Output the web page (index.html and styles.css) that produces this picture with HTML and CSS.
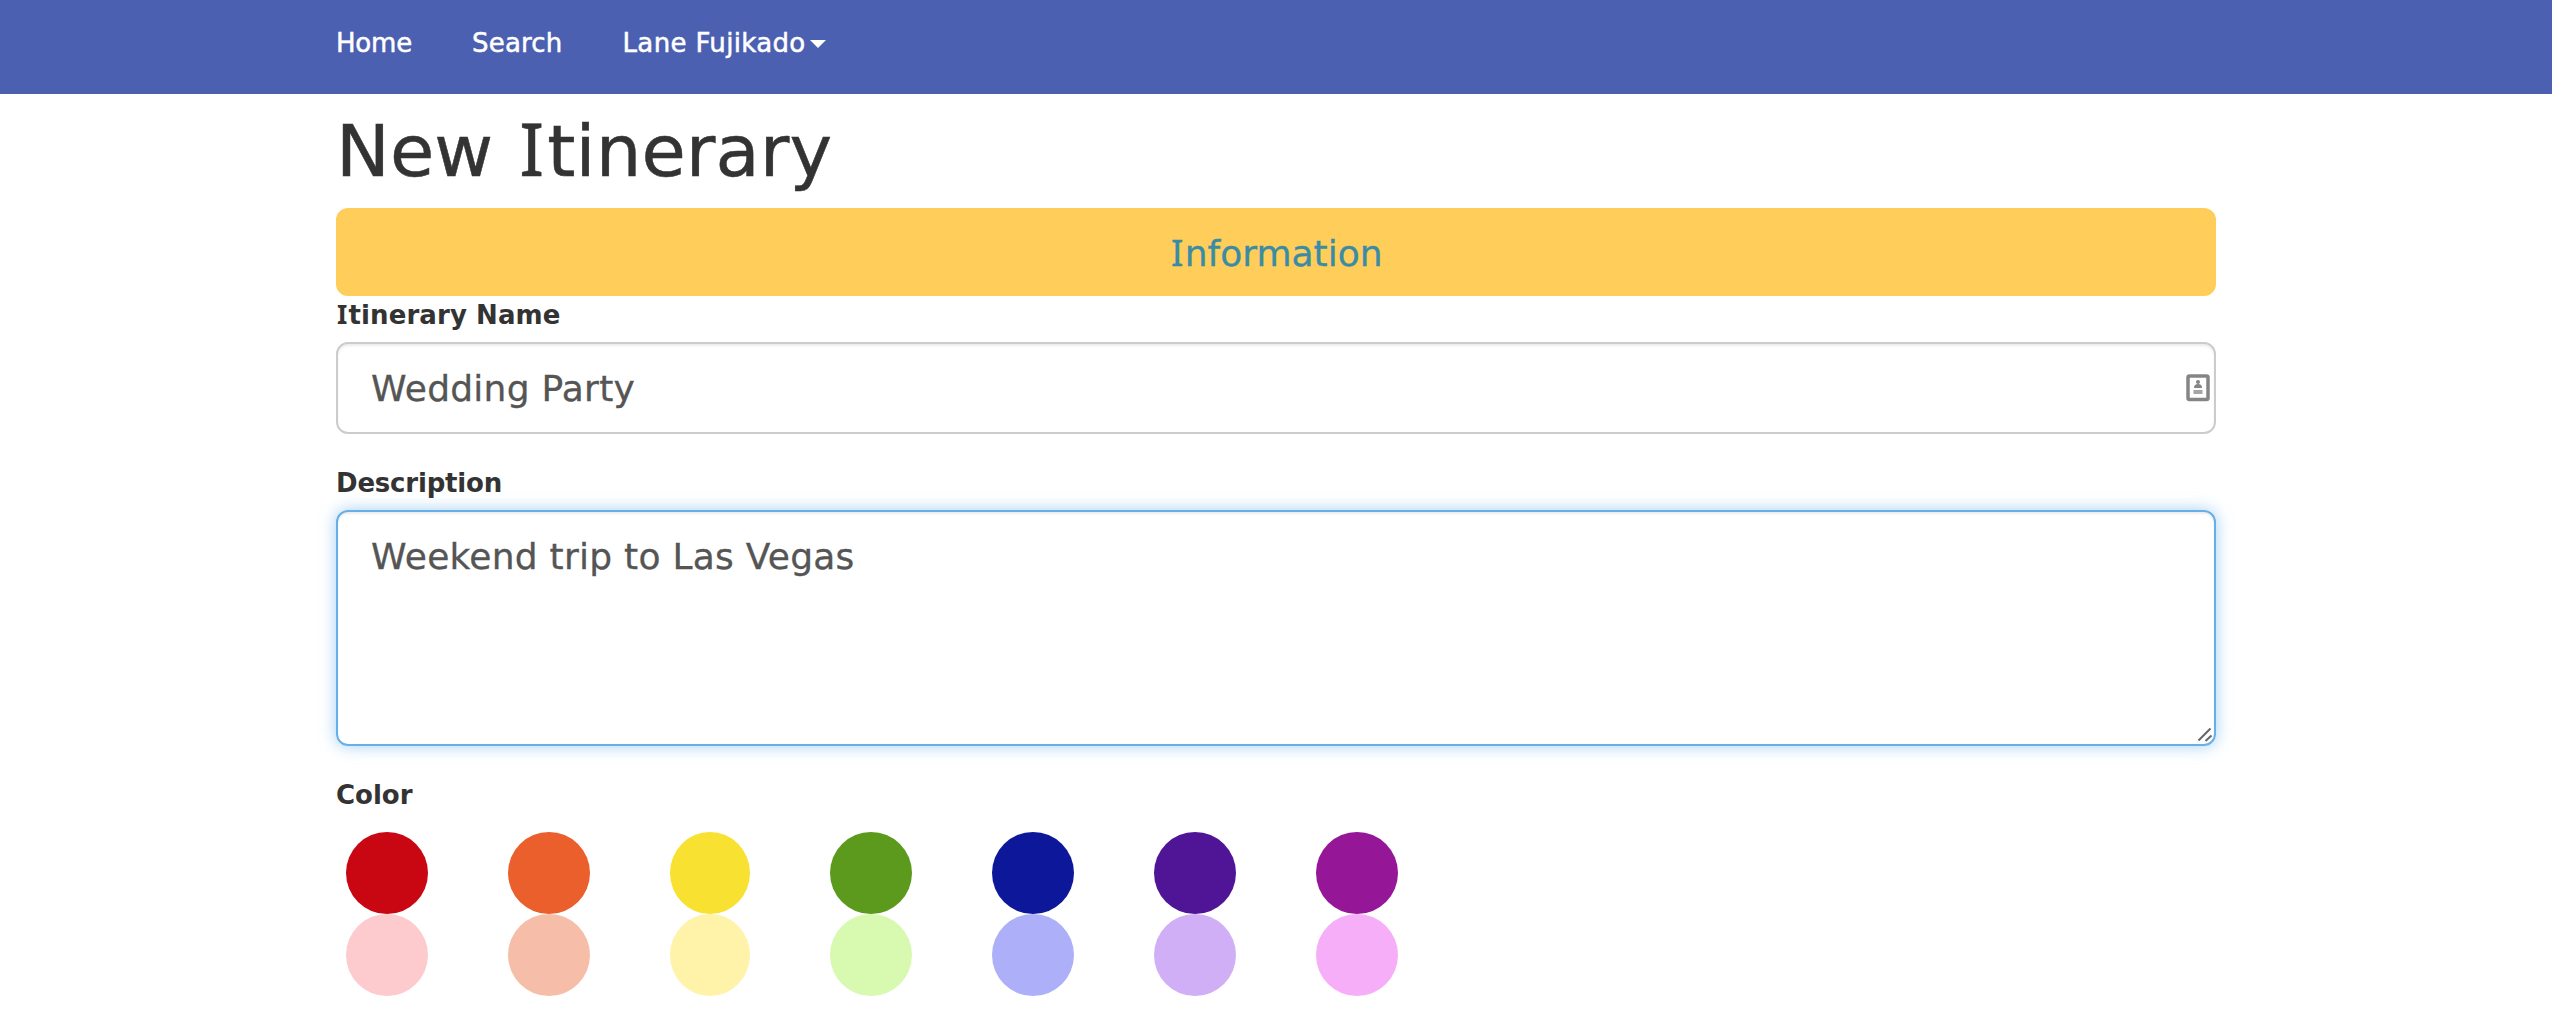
FILE: index.html
```html
<!DOCTYPE html>
<html lang="en">
<head>
<meta charset="utf-8">
<title>New Itinerary</title>
<link rel="stylesheet" href="styles.css">
</head>
<body>
<nav class="navbar">
  <div class="container nav-links">
    <a class="home">Home</a>
    <a>Search</a>
    <a class="user">Lane Fujikado<span class="caret"></span></a>
  </div>
</nav>
<main class="container">
  <h1 class="title">New <span class="serif-i">I</span>tinerary</h1>
  <div class="banner"><span class="serif-i">I</span>nformation</div>
  <form class="form">
    <section class="group">
      <label class="label name-label"><span class="serif-i">I</span>tinerary Name</label>
      <div class="control input">
        <span class="value name-value">Wedding Party</span>
        <svg class="contact" width="24" height="28" viewBox="0 0 24 28">
          <rect x="2" y="2" width="20" height="23.500" rx="1.500" fill="#fff" stroke="#858585" stroke-width="3.500"/>
          <circle cx="12" cy="8" r="2" fill="#858585"/>
          <path d="M8 14q0-4 4-4q4 0 4 4z" fill="#858585"/>
          <path d="M7.500 18h9" stroke="#a5a5a5" stroke-width="4"/>
        </svg>
      </div>
    </section>
    <section class="group">
      <label class="label desc-label">Description</label>
      <div class="control textarea">
        <span class="value desc-value">Weekend trip to Las Vegas</span>
        <svg class="grip" width="16" height="16" viewBox="0 0 16 16">
          <path d="M1.500 13.500L13.500 1.500M8.500 14L14.500 8.500" stroke="#666" stroke-width="2"/>
        </svg>
      </div>
    </section>
    <section class="group">
      <label class="label color-label">Color</label>
      <div class="swatches">
        <i class="dot red"></i><i class="dot orange"></i><i class="dot yellow"></i><i class="dot green"></i><i class="dot blue"></i><i class="dot purple"></i><i class="dot magenta"></i>
        <i class="dot red-light"></i><i class="dot orange-light"></i><i class="dot yellow-light"></i><i class="dot green-light"></i><i class="dot blue-light"></i><i class="dot purple-light"></i><i class="dot magenta-light"></i>
      </div>
    </section>
  </form>
</main>
</body>
</html>
```
FILE: styles.css
```css
* { box-sizing: border-box; }
body {
  margin: 0;
  background: #fff;
  color: #333;
  font-family: Verdana, "DejaVu Sans", sans-serif;
  font-size: 26px;
}
.container { width: 1880px; margin: 0 auto; }
.navbar { height: 94px; padding-top: 23px; background: #4b60b1; }
.nav-links {
  display: flex;
  gap: 60px;
  color: #fff;
  line-height: 40px;
  letter-spacing: 0.2px;
  -webkit-text-stroke: 0.5px #fff;
}
.home { letter-spacing: -0.2px; }
.user { display: flex; align-items: center; letter-spacing: 0.35px; }
.caret {
  margin: 2px 0 0 4px;
  border-top: 8px solid #fff;
  border-left: 8px solid transparent;
  border-right: 8px solid transparent;
}
.serif-i { font-family: "Noto Sans", sans-serif; font-size: 1.02em; line-height: 0; padding: 0 0.04em; }
.title {
  margin: 17px 0;
  font-size: 72px;
  font-weight: 400;
  line-height: 80px;
  letter-spacing: 0.1px;
  -webkit-text-stroke: 0.5px #333;
}
.banner {
  height: 88px;
  padding-top: 2px;
  border-radius: 12px;
  background: #ffcd5a;
  color: #3a8ca5;
  font-size: 36px;
  line-height: 87px;
  text-align: center;
  -webkit-text-stroke: 0.3px #3a8ca5;
}
.form { display: flex; flex-direction: column; gap: 30px; }
.label { display: block; margin-bottom: 8px; font-weight: 700; line-height: 38px; }
.name-label { letter-spacing: 0.1px; }
.desc-label { letter-spacing: -0.2px; }
.control {
  display: flex;
  justify-content: space-between;
  border: 2px solid #ccc;
  border-radius: 12px;
  box-shadow: inset 0 2px 2px rgba(0, 0, 0, 0.075);
  color: #555;
  font-size: 36px;
}
.input { height: 92px; align-items: center; padding: 0 4px 0 33px; }
.value { line-height: 50px; padding-top: 2px; letter-spacing: 0.25px; -webkit-text-stroke: 0.3px #555; }
.textarea {
  height: 236px;
  padding: 18px 1px 1px 33px;
  border-color: #66afe9;
  box-shadow: inset 0 2px 2px rgba(0, 0, 0, 0.075), 0 0 16px rgba(102, 175, 233, 0.6);
}
.grip { align-self: flex-end; }
.swatches {
  display: grid;
  grid-template-columns: 82px 82px 80px 82px 82px 82px 82px;
  column-gap: 80px;
  padding: 10px 0 0 10px;
}
.dot { height: 82px; border-radius: 50%; }
.red { background: #c80713; }
.orange { background: #eb5f2d; }
.yellow { background: #f8e131; }
.green { background: #5b9a1d; }
.blue { background: #0c1899; }
.purple { background: #501597; }
.magenta { background: #951697; }
.red-light { background: #fdcbce; }
.orange-light { background: #f6bea8; }
.yellow-light { background: #fff3aa; }
.green-light { background: #d7f9b0; }
.blue-light { background: #adb0f8; }
.purple-light { background: #d0aff6; }
.magenta-light { background: #f7aef8; }
```
